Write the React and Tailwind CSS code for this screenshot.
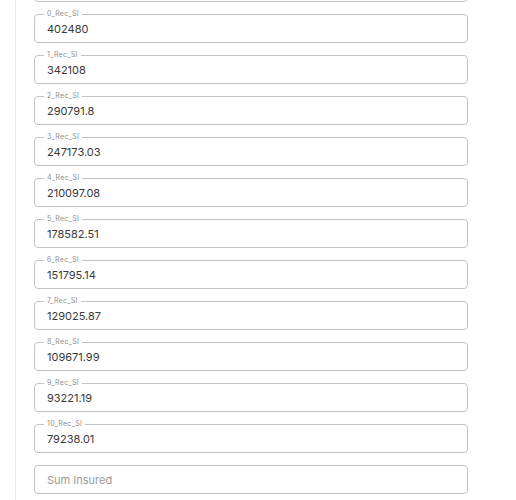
const fields = [
  { label: '', value: '' },
  { label: '0_Rec_SI', value: '402480' },
  { label: '1_Rec_SI', value: '342108' },
  { label: '2_Rec_SI', value: '290791.8' },
  { label: '3_Rec_SI', value: '247173.03' },
  { label: '4_Rec_SI', value: '210097.08' },
  { label: '5_Rec_SI', value: '178582.51' },
  { label: '6_Rec_SI', value: '151795.14' },
  { label: '7_Rec_SI', value: '129025.87' },
  { label: '8_Rec_SI', value: '109671.99' },
  { label: '9_Rec_SI', value: '93221.19' },
  { label: '10_Rec_SI', value: '79238.01' },
]

function OutlinedField({ label, value, placeholder }) {
  return (
    <div className="relative h-[29px] w-[434px] shrink-0 rounded-[4px] border border-[#c4c4c4]">
      {label && (
        <span className="absolute left-[9px] top-[-6px] bg-white px-[3px] text-[7px] leading-[10px] tracking-[0.3px] text-[#8f8f8f]">
          {label}
        </span>
      )}
      <input
        readOnly
        value={value ?? ''}
        placeholder={placeholder}
        className="h-full w-full bg-transparent pl-[12px] text-[11px] text-[#3a3a3a] placeholder:text-[#9a9a9a] focus:outline-none"
      />
    </div>
  )
}

export default function App() {
  return (
    <div className="h-[500px] w-[516px] overflow-hidden bg-white font-['Inter',sans-serif]">
      <div className="ml-[15px] flex h-full flex-col border-l border-[#ececec] pl-[18px]">
        <div className="-mt-[27px] flex flex-col gap-[12px]">
          {fields.map((f, i) => (
            <OutlinedField key={i} label={f.label} value={f.value} />
          ))}
          <OutlinedField placeholder="Sum Insured" />
        </div>
      </div>
    </div>
  )
}
